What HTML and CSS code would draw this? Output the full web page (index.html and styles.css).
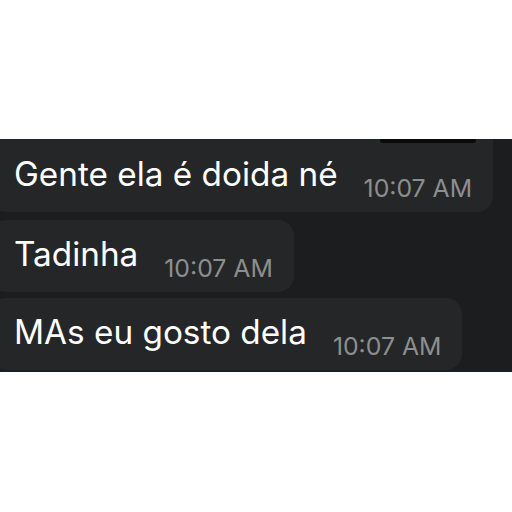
FILE: index.html
```html
<!DOCTYPE html>
<html>
<head>
<meta charset="utf-8">
<link rel="stylesheet" href="styles.css">
</head>
<body>
<div class="band">
  <div class="topbar"></div>
  <div class="bubble first">
    <span class="msg">Gente ela é doida né</span>
    <span class="time">10:07 AM</span>
  </div>
  <div class="bubble second">
    <span class="msg">Tadinha</span>
    <span class="time">10:07 AM</span>
  </div>
  <div class="bubble third">
    <span class="msg">MAs eu gosto dela</span>
    <span class="time">10:07 AM</span>
  </div>
</div>
</body>
</html>
```
FILE: styles.css
```css
html, body {
  margin: 0;
  padding: 0;
  background: #ffffff;
}
.band {
  margin-top: 139px;
  height: 233px;
  background: #1b1d1e;
  overflow: hidden;
  position: relative;
  display: flex;
  flex-direction: column;
  align-items: flex-start;
  font-family: Inter, "Noto Sans", sans-serif;
}
.topbar {
  position: absolute;
  top: 0;
  left: 380px;
  width: 96px;
  height: 4px;
  background: #0a0a0a;
  border-radius: 0 0 3px 3px;
}
.bubble {
  display: flex;
  align-items: flex-end;
  box-sizing: border-box;
  height: 72px;
  margin-left: -10px;
  padding: 0 21px 0 24px;
  background: #252628;
  border-radius: 16px;
}
.bubble.first {
  height: 73px;
  border-radius: 0 0 16px 16px;
}
.bubble.second {
  margin-top: 8px;
}
.bubble.third {
  margin-top: 6px;
}
.msg {
  color: #ffffff;
  font-size: 33.3px;
  line-height: 33px;
  margin-bottom: 21px;
  white-space: nowrap;
}
.time {
  color: #8d8e90;
  font-size: 24.8px;
  line-height: 24px;
  margin-left: 26px;
  margin-bottom: 12px;
  white-space: nowrap;
}
```
